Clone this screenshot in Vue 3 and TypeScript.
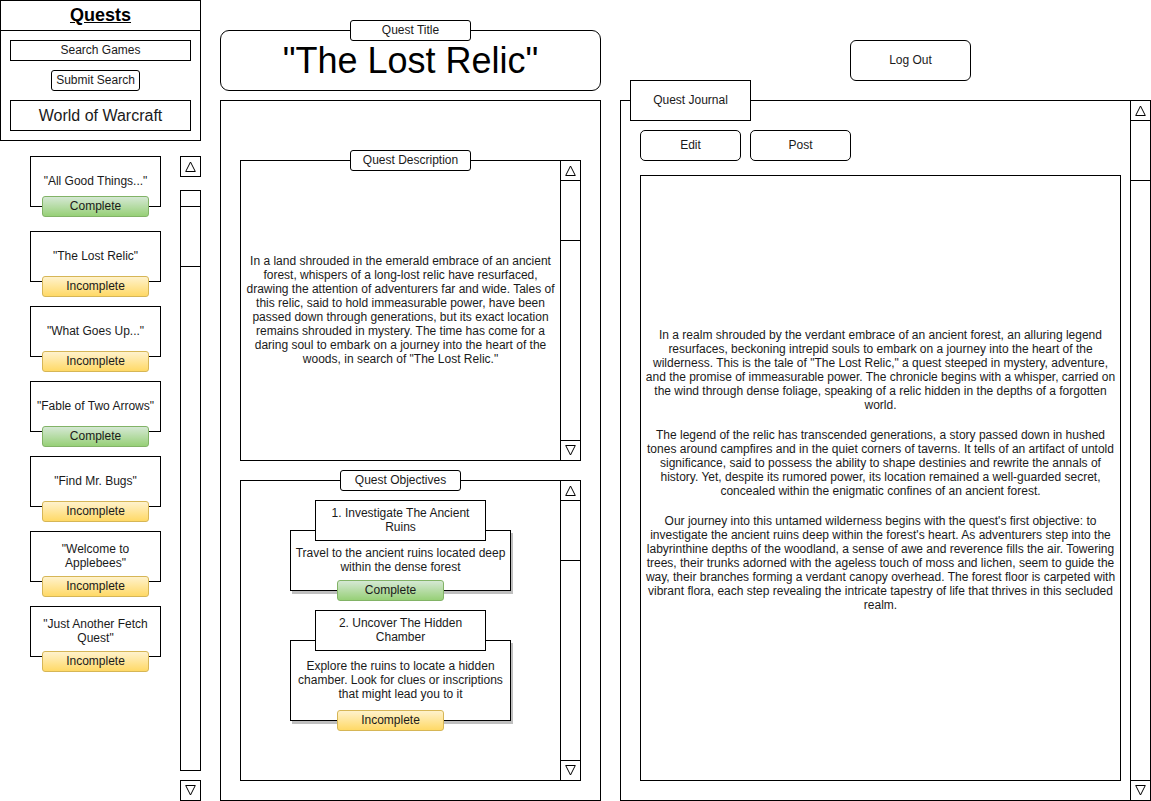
<script setup lang="ts">
import { ref } from 'vue'

type Status = 'Complete' | 'Incomplete'

interface Quest {
  name: string
  status: Status
  raised?: boolean
}

interface Objective {
  title: string
  text: string
  status: Status
  tall?: boolean
}

const search = ref('')

const quests: Quest[] = [
  { name: '"All Good Things..."', status: 'Complete', raised: true },
  { name: '"The Lost Relic"', status: 'Incomplete' },
  { name: '"What Goes Up..."', status: 'Incomplete' },
  { name: '"Fable of Two Arrows"', status: 'Complete' },
  { name: '"Find Mr. Bugs"', status: 'Incomplete' },
  { name: '"Welcome to Applebees"', status: 'Incomplete' },
  { name: '"Just Another Fetch Quest"', status: 'Incomplete' },
]

const objectives: Objective[] = [
  {
    title: '1. Investigate The Ancient Ruins',
    text: 'Travel to the ancient ruins located deep within the dense forest',
    status: 'Complete',
  },
  {
    title: '2. Uncover The Hidden Chamber',
    text: 'Explore the ruins to locate a hidden chamber. Look for clues or inscriptions that might lead you to it',
    status: 'Incomplete',
    tall: true,
  },
]

const journal: string[] = [
  'In a realm shrouded by the verdant embrace of an ancient forest, an alluring legend resurfaces, beckoning intrepid souls to embark on a journey into the heart of the wilderness. This is the tale of "The Lost Relic," a quest steeped in mystery, adventure, and the promise of immeasurable power. The chronicle begins with a whisper, carried on the wind through dense foliage, speaking of a relic hidden in the depths of a forgotten world.',
  'The legend of the relic has transcended generations, a story passed down in hushed tones around campfires and in the quiet corners of taverns. It tells of an artifact of untold significance, said to possess the ability to shape destinies and rewrite the annals of history. Yet, despite its rumored power, its location remained a well-guarded secret, concealed within the enigmatic confines of an ancient forest.',
  "Our journey into this untamed wilderness begins with the quest's first objective: to investigate the ancient ruins deep within the forest's heart. As adventurers step into the labyrinthine depths of the woodland, a sense of awe and reverence fills the air. Towering trees, their trunks adorned with the ageless touch of moss and lichen, seem to guide the way, their branches forming a verdant canopy overhead. The forest floor is carpeted with vibrant flora, each step revealing the intricate tapestry of life that thrives in this secluded realm.",
]
</script>

<template>
  <div class="page">
    <aside class="sidebar">
      <section class="search-panel">
        <h1 class="heading">Quests</h1>
        <form class="search-form" @submit.prevent>
          <input v-model="search" class="search" type="text" placeholder="Search Games" aria-label="Search Games" />
          <div class="submit-row">
            <button class="submit" type="submit">Submit Search</button>
          </div>
          <div class="game">World of Warcraft</div>
        </form>
      </section>

      <div class="quest-area">
        <ul class="quests">
          <li v-for="quest in quests" :key="quest.name" class="quest">
            <div class="quest-card">{{ quest.name }}</div>
            <span class="badge" :class="[quest.status.toLowerCase(), { raised: quest.raised }]">{{ quest.status }}</span>
          </li>
        </ul>
        <div class="scrollbar detached">
          <button class="arrow" type="button" aria-label="Scroll quests up">
            <svg viewBox="0 0 11 11"><path d="M5.5 1 L10.3 10.5 H0.7 Z" /></svg>
          </button>
          <div class="track"><div class="thumb"></div></div>
          <button class="arrow" type="button" aria-label="Scroll quests down">
            <svg viewBox="0 0 11 11"><path d="M5.5 10 L0.7 0.5 H10.3 Z" /></svg>
          </button>
        </div>
      </div>
    </aside>

    <main class="details">
      <header class="title-box">
        <span class="label">Quest Title</span>
        <h2 class="title">"The Lost Relic"</h2>
      </header>

      <div class="detail-panel">
        <section class="box">
          <h3 class="label">Quest Description</h3>
          <div class="box-body description">
            <p>
              In a land shrouded in the emerald embrace of an ancient forest, whispers of a long-lost relic have
              resurfaced, drawing the attention of adventurers far and wide. Tales of this relic, said to hold
              immeasurable power, have been passed down through generations, but its exact location remains shrouded in
              mystery. The time has come for a daring soul to embark on a journey into the heart of the woods, in search
              of "The Lost Relic."
            </p>
          </div>
          <div class="scrollbar">
            <button class="arrow" type="button" aria-label="Scroll description up">
              <svg viewBox="0 0 11 11"><path d="M5.5 1 L10.3 10.5 H0.7 Z" /></svg>
            </button>
            <div class="track"><div class="thumb"></div></div>
            <button class="arrow" type="button" aria-label="Scroll description down">
              <svg viewBox="0 0 11 11"><path d="M5.5 10 L0.7 0.5 H10.3 Z" /></svg>
            </button>
          </div>
        </section>

        <section class="box">
          <div class="box-body objectives">
            <h3 class="label">Quest Objectives</h3>
            <article v-for="item in objectives" :key="item.title" class="objective">
              <h4 class="objective-title">{{ item.title }}</h4>
              <p class="objective-card" :class="{ tall: item.tall }">{{ item.text }}</p>
              <span class="badge raised" :class="item.status.toLowerCase()">{{ item.status }}</span>
            </article>
          </div>
          <div class="scrollbar">
            <button class="arrow" type="button" aria-label="Scroll objectives up">
              <svg viewBox="0 0 11 11"><path d="M5.5 1 L10.3 10.5 H0.7 Z" /></svg>
            </button>
            <div class="track"><div class="thumb"></div></div>
            <button class="arrow" type="button" aria-label="Scroll objectives down">
              <svg viewBox="0 0 11 11"><path d="M5.5 10 L0.7 0.5 H10.3 Z" /></svg>
            </button>
          </div>
        </section>
      </div>
    </main>

    <section class="journal">
      <div class="account">
        <button class="logout" type="button">Log Out</button>
      </div>
      <div class="journal-panel">
        <h2 class="tab">Quest Journal</h2>
        <div class="journal-body">
          <div class="actions">
            <button class="action" type="button">Edit</button>
            <button class="action" type="button">Post</button>
          </div>
          <article class="entry">
            <p v-for="(paragraph, i) in journal" :key="i">{{ paragraph }}</p>
          </article>
        </div>
        <div class="scrollbar">
          <button class="arrow" type="button" aria-label="Scroll journal up">
            <svg viewBox="0 0 11 11"><path d="M5.5 1 L10.3 10.5 H0.7 Z" /></svg>
          </button>
          <div class="track"><div class="thumb"></div></div>
          <button class="arrow" type="button" aria-label="Scroll journal down">
            <svg viewBox="0 0 11 11"><path d="M5.5 10 L0.7 0.5 H10.3 Z" /></svg>
          </button>
        </div>
      </div>
    </section>
  </div>
</template>

<style>
body {
  margin: 0;
  background: #fff;
}
</style>

<style scoped>
.page,
.page * {
  box-sizing: border-box;
}

.page {
  display: grid;
  grid-template-columns: 201px minmax(0, 381fr) minmax(0, 531fr);
  gap: 19px;
  min-height: 100vh;
  color: #1a1a1a;
  font-family: 'Liberation Sans', Arial, Helvetica, sans-serif;
  font-size: 12px;
  line-height: 14px;
  text-align: center;
}

h1,
h2,
h3,
h4,
p,
ul {
  margin: 0;
  padding: 0;
  font-size: inherit;
  font-weight: normal;
}

button,
input {
  margin: 0;
  padding: 0 0 2px;
  border: 1px solid #000;
  border-radius: 0;
  background: #fff;
  color: inherit;
  font: inherit;
  text-align: center;
}

button {
  cursor: pointer;
}

/* Sidebar */
.sidebar {
  display: flex;
  flex-direction: column;
  gap: 15px;
}

.search-panel {
  border: 1px solid #000;
}

.heading {
  height: 30px;
  border-bottom: 1px solid #000;
  color: #000;
  font-size: 18px;
  font-weight: bold;
  line-height: 28px;
  text-decoration: underline;
}

.search-form {
  display: flex;
  flex-direction: column;
  gap: 9px;
  padding: 9px;
}

.search {
  width: 100%;
  height: 21px;
}

.search::placeholder {
  color: #1a1a1a;
  opacity: 1;
}

.submit-row {
  display: flex;
  justify-content: center;
  padding-right: 10px;
}

.submit {
  height: 21px;
  padding: 0 4px 2px;
  border-radius: 3px;
}

.game {
  border: 1px solid #000;
  font-size: 16px;
  line-height: 29px;
}

.quest-area {
  display: flex;
  flex: 1;
  justify-content: space-between;
  padding-left: 30px;
}

.quests {
  display: grid;
  grid-auto-rows: 1fr;
  gap: 9px;
  align-self: flex-start;
  width: 131px;
  list-style: none;
}

.quest {
  display: flex;
  flex-direction: column;
  align-items: center;
}

.quest-card {
  display: flex;
  align-items: center;
  justify-content: center;
  width: 100%;
  min-height: 51px;
  padding: 2px 2px 4px;
  border: 1px solid #000;
}

.badge {
  width: 107px;
  height: 21px;
  margin-top: -6px;
  border: 1px solid;
  border-radius: 3px;
  line-height: 19px;
}

.badge.raised {
  margin-top: -11px;
}

.complete {
  border-color: #82b366;
  background: linear-gradient(#d5e8d4, #97d077);
}

.incomplete {
  border-color: #d6b656;
  background: linear-gradient(#fff2cc, #ffd966);
}

/* Scrollbars */
.scrollbar {
  display: flex;
  flex: none;
  flex-direction: column;
  width: 20px;
  border-left: 1px solid #000;
}

.arrow {
  display: flex;
  flex: none;
  align-items: center;
  justify-content: center;
  height: 20px;
  padding: 0;
  border-width: 0 0 1px;
}

.arrow:last-child {
  border-width: 1px 0 0;
}

.arrow svg {
  width: 11px;
  height: 11px;
  fill: none;
  stroke: #000;
  stroke-width: 1;
}

.track {
  flex: 1;
}

.thumb {
  height: 60px;
  border-bottom: 1px solid #000;
}

.detached {
  width: 21px;
  border-left: 0;
}

.detached .arrow {
  height: 21px;
  border-width: 1px;
}

.detached .track {
  margin: 13px 0 9px;
  padding-top: 15px;
  border: 1px solid #000;
}

.detached .thumb {
  height: 61px;
  border-top: 1px solid #000;
}

/* Quest details */
.details {
  display: flex;
  flex-direction: column;
  gap: 9px;
  padding-top: 30px;
}

.title-box {
  position: relative;
  border: 1px solid #000;
  border-radius: 9px;
}

.title {
  color: #000;
  font-size: 36px;
  line-height: 59px;
}

.label {
  position: absolute;
  top: -11px;
  right: 0;
  left: 0;
  width: 121px;
  height: 21px;
  margin: 0 auto;
  border: 1px solid #000;
  border-radius: 3px;
  background: #fff;
  line-height: 19px;
}

.detail-panel {
  display: flex;
  flex: 1;
  flex-direction: column;
  gap: 19px;
  padding: 59px 19px 19px;
  border: 1px solid #000;
}

.box {
  position: relative;
  display: flex;
  flex: 1 0 0;
  border: 1px solid #000;
}

.box-body {
  display: flex;
  flex: 1;
  flex-direction: column;
  min-width: 0;
}

.description {
  justify-content: center;
  padding: 2px 2px 4px;
}

.objectives {
  position: relative;
  align-items: center;
  gap: 9px;
  padding: 19px 9px;
}

.objective {
  display: flex;
  flex-direction: column;
  align-items: center;
  width: 221px;
}

.objective-title {
  z-index: 1;
  width: 171px;
  padding: 5px 4px 6px;
  border: 1px solid #000;
  background: #fff;
}

.objective-card {
  display: flex;
  align-items: center;
  width: 100%;
  min-height: 61px;
  margin-top: -11px;
  padding: 0 4px 2px;
  border: 1px solid #000;
  background: #fff;
  box-shadow: 2px 3px 0 #bfbfbf;
}

.objective-card.tall {
  min-height: 81px;
}

.objective .badge {
  align-self: flex-start;
  margin-left: 47px;
}

/* Journal */
.journal {
  display: flex;
  flex-direction: column;
  gap: 19px;
  padding-top: 40px;
}

.account {
  display: flex;
  justify-content: flex-end;
  padding-right: 180px;
}

.logout {
  width: 121px;
  height: 41px;
  border-radius: 6px;
}

.journal-panel {
  position: relative;
  display: flex;
  flex: 1;
  border: 1px solid #000;
}

.tab {
  position: absolute;
  top: -21px;
  left: 9px;
  width: 121px;
  border: 1px solid #000;
  background: #fff;
  line-height: 39px;
}

.journal-body {
  display: flex;
  flex: 1;
  flex-direction: column;
  gap: 14px;
  min-width: 0;
  padding: 29px 9px 19px 19px;
}

.actions {
  display: flex;
  gap: 9px;
}

.action {
  width: 101px;
  height: 31px;
  border-radius: 5px;
}

.entry {
  display: flex;
  flex: 1;
  flex-direction: column;
  justify-content: center;
  gap: 16px;
  padding: 2px 2px 18px;
  border: 1px solid #000;
}
</style>
